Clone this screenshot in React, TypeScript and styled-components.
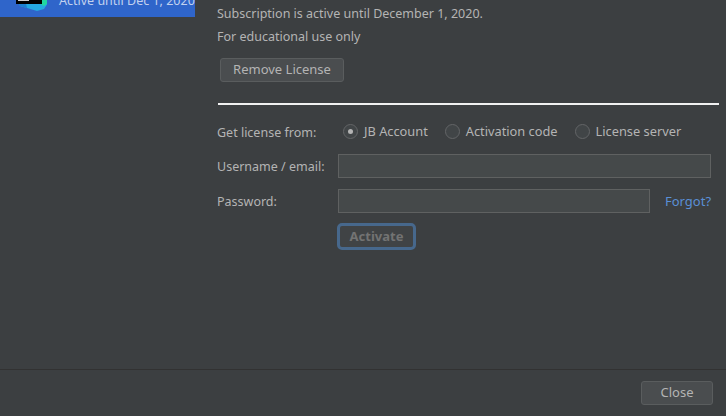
import React from "react";
import styled, { createGlobalStyle } from "styled-components";

const Global = createGlobalStyle`
  html, body { margin: 0; padding: 0; background: #3c3f41; }
  #root { width: 726px; height: 416px; overflow: hidden; }
`;

const Dialog = styled.div`
  width: 726px;
  height: 416px;
  display: flex;
  flex-direction: column;
  overflow: hidden;
  background: #3c3f41;
  color: #b4b4b4;
  font: 12.5px/17px "Noto Sans", sans-serif;
`;
const Main = styled.div`
  flex: 1;
  min-height: 0;
  display: flex;
`;
const Sidebar = styled.aside`
  width: 195px;
  flex: none;
  overflow: hidden;
`;
const ProductRow = styled.div`
  height: 40px;
  margin-top: -23px;
  background: #2f65ca;
  display: flex;
  align-items: flex-start;
  padding-left: 8px;
  gap: 12px;
  box-sizing: border-box;
  color: #c2d1ee;
  white-space: nowrap;
  overflow: hidden;
`;
const LogoSvg = styled.svg`
  flex: none;
  width: 39px;
  height: 38px;
`;
const ProductText = styled.span`
  padding-top: 15px;
`;
const Content = styled.section`
  flex: 1;
  padding: 5px 7px 0 22px;
  display: flex;
  flex-direction: column;
`;
const Info = styled.p`
  margin: 0 0 6px;
  height: 17px;
`;
const Button = styled.button`
  box-sizing: border-box;
  height: 24px;
  background: #4a4d4f;
  border: 1px solid #5a5d5e;
  border-radius: 3px;
  color: #b4b4b4;
  font: inherit;
  font-size: 13px;
  padding: 0 0 1px;
`;
const RemoveButton = styled(Button)`
  width: 124px;
  margin: 7px 0 0 3px;
`;
const Separator = styled.hr`
  margin: 21px 0 0 1px;
  height: 2px;
  border: 0;
  background: #f1f1f1;
`;
const Form = styled.div`
  margin-top: 16px;
  display: grid;
  grid-template-columns: 121px 1fr;
  row-gap: 11px;
  align-items: center;
`;
const Radios = styled.div`
  display: flex;
  align-items: center;
  height: 20px;
  padding-left: 5px;
  margin-bottom: 2px;
  gap: 17px;
  font-size: 12.8px;
`;
const RadioLabel = styled.label`
  display: flex;
  align-items: center;
  gap: 6px;
`;
const RadioCircle = styled.span<{ $on?: boolean }>`
  box-sizing: border-box;
  width: 15px;
  height: 15px;
  border-radius: 50%;
  border: 1px solid #636567;
  background: #414547;
  display: flex;
  align-items: center;
  justify-content: center;
  &::after {
    content: "";
    width: 5px;
    height: 5px;
    border-radius: 50%;
    background: ${(p) => (p.$on ? "#b4b4b4" : "transparent")};
  }
`;
const Field = styled.div`
  display: flex;
  align-items: center;
  gap: 15px;
`;
const Input = styled.input<{ $w: number }>`
  box-sizing: border-box;
  width: ${(p) => p.$w}px;
  height: 24px;
  flex: none;
  background: #45494a;
  border: 1px solid #5f6161;
  padding: 0;
  outline: none;
`;
const Link = styled.a`
  color: #5a8fd6;
  font-size: 13px;
`;
const ActivateButton = styled(Button)`
  grid-column: 2;
  width: 79px;
  height: 27px;
  margin: -1px 0 0 -1px;
  background: #404345;
  border: 3px solid #47688c;
  border-radius: 5px;
  color: #737373;
  font-weight: 700;
`;
const Footer = styled.footer`
  height: 47px;
  flex: none;
  box-sizing: border-box;
  border-top: 1px solid #323232;
  display: flex;
  justify-content: flex-end;
  align-items: flex-start;
  padding: 11px 13px 0 0;
`;
const CloseButton = styled(Button)`
  width: 72px;
`;

export default function App() {
  return (
    <Dialog>
      <Global />
      <Main>
        <Sidebar>
          <ProductRow>
            <LogoSvg viewBox="8 -23 39 38">
              <path d="M15 -6 H48 V3 L44 9 L37 11 L27 8 L20 6 Z" fill="#25a8e0" />
              <path d="M40 -6 H48 V3 L44 6 L38 3 Z" fill="#21d7a0" />
              <path d="M15 -6 H24 L27 8 L20 6 Z" fill="#1d7fd0" />
              <rect x="16" y="-20" width="26" height="24" fill="#000000" />
              <rect x="18" y="-2" width="11" height="3" fill="#cfcfcf" />
            </LogoSvg>
            <ProductText>Active until Dec 1, 2020</ProductText>
          </ProductRow>
        </Sidebar>
        <Content>
          <Info>Subscription is active until December 1, 2020.</Info>
          <Info>For educational use only</Info>
          <RemoveButton>Remove License</RemoveButton>
          <Separator />
          <Form>
            <span>Get license from:</span>
            <Radios>
              <RadioLabel><RadioCircle $on />JB Account</RadioLabel>
              <RadioLabel><RadioCircle />Activation code</RadioLabel>
              <RadioLabel><RadioCircle />License server</RadioLabel>
            </Radios>
            <span>Username / email:</span>
            <Field><Input $w={373} /></Field>
            <span>Password:</span>
            <Field><Input $w={312} type="password" /><Link>Forgot?</Link></Field>
            <ActivateButton>Activate</ActivateButton>
          </Form>
        </Content>
      </Main>
      <Footer>
        <CloseButton>Close</CloseButton>
      </Footer>
    </Dialog>
  );
}
